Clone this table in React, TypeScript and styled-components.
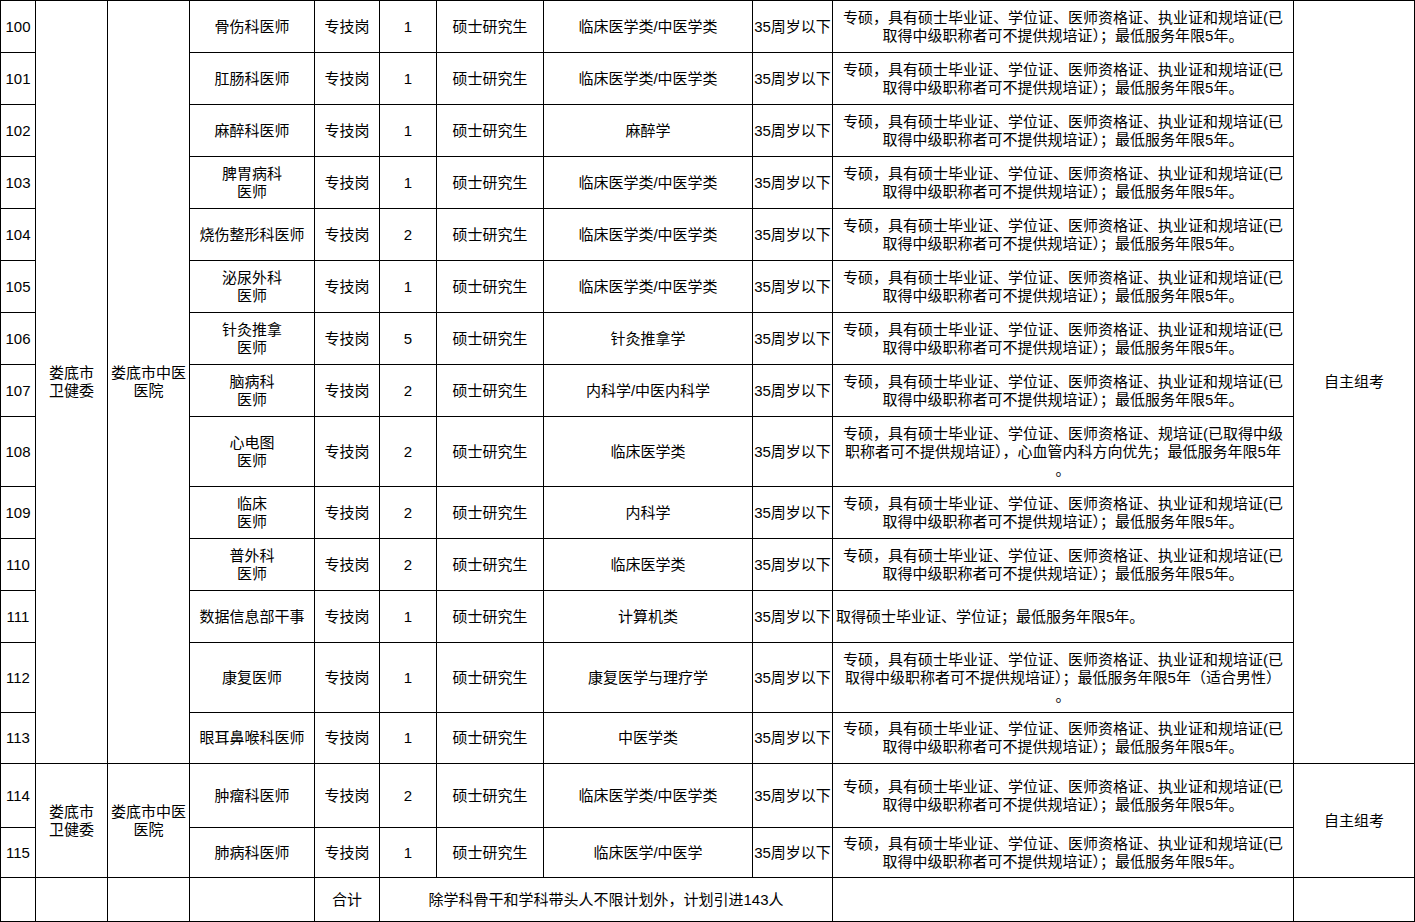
import React from 'react';
import styled, { createGlobalStyle } from 'styled-components';

const GlobalStyle = createGlobalStyle`
  html, body {
    margin: 0;
    padding: 0;
    background: #fff;
  }
  body {
    font-family: 'Liberation Sans', 'Noto Sans CJK SC', sans-serif;
    color: #000;
  }
`;

const Sheet = styled.table`
  border-collapse: collapse;
  table-layout: fixed;
  width: 1414px;
  font-size: 15px;
  line-height: 18px;
`;

const Row = styled.tr<{ $h: number }>`
  height: ${(p) => p.$h}px;
`;

const Cell = styled.td<{ $left?: boolean }>`
  border: 1px solid #000;
  padding: 0;
  text-align: ${(p) => (p.$left ? 'left' : 'center')};
  vertical-align: middle;
  white-space: nowrap;
  overflow: hidden;
  padding-left: ${(p) => (p.$left ? '3px' : '0')};
`;

const Line = styled.div`
  white-space: nowrap;
`;

const widths = [35, 72, 82, 125, 65, 57, 107, 209, 80, 461, 121];

const STD = [
  '专硕，具有硕士毕业证、学位证、医师资格证、执业证和规培证(已',
  '取得中级职称者可不提供规培证）；最低服务年限5年。',
];

type Job = {
  no: number;
  post: string[];
  count: number;
  major: string;
  cond?: string[];
  left?: boolean;
  h: number;
};

const jobs: Job[] = [
  { no: 100, post: ['骨伤科医师'], count: 1, major: '临床医学类/中医学类', h: 52 },
  { no: 101, post: ['肛肠科医师'], count: 1, major: '临床医学类/中医学类', h: 52 },
  { no: 102, post: ['麻醉科医师'], count: 1, major: '麻醉学', h: 52 },
  { no: 103, post: ['脾胃病科', '医师'], count: 1, major: '临床医学类/中医学类', h: 52 },
  { no: 104, post: ['烧伤整形科医师'], count: 2, major: '临床医学类/中医学类', h: 52 },
  { no: 105, post: ['泌尿外科', '医师'], count: 1, major: '临床医学类/中医学类', h: 52 },
  { no: 106, post: ['针灸推拿', '医师'], count: 5, major: '针灸推拿学', h: 52 },
  { no: 107, post: ['脑病科', '医师'], count: 2, major: '内科学/中医内科学', h: 52 },
  {
    no: 108,
    post: ['心电图', '医师'],
    count: 2,
    major: '临床医学类',
    cond: [
      '专硕，具有硕士毕业证、学位证、医师资格证、规培证(已取得中级',
      '职称者可不提供规培证），心血管内科方向优先；最低服务年限5年',
      '。',
    ],
    h: 70,
  },
  { no: 109, post: ['临床', '医师'], count: 2, major: '内科学', h: 52 },
  { no: 110, post: ['普外科', '医师'], count: 2, major: '临床医学类', h: 52 },
  {
    no: 111,
    post: ['数据信息部干事'],
    count: 1,
    major: '计算机类',
    cond: ['取得硕士毕业证、学位证；最低服务年限5年。'],
    left: true,
    h: 52,
  },
  {
    no: 112,
    post: ['康复医师'],
    count: 1,
    major: '康复医学与理疗学',
    cond: [
      '专硕，具有硕士毕业证、学位证、医师资格证、执业证和规培证(已',
      '取得中级职称者可不提供规培证）；最低服务年限5年（适合男性）',
      '。',
    ],
    h: 70,
  },
  { no: 113, post: ['眼耳鼻喉科医师'], count: 1, major: '中医学类', h: 51 },
  { no: 114, post: ['肿瘤科医师'], count: 2, major: '临床医学类/中医学类', h: 64 },
  { no: 115, post: ['肺病科医师'], count: 1, major: '临床医学/中医学', h: 50 },
];

// merged blocks: first row number -> how many rows the unit / hospital / exam cells span
const groups: Record<number, number> = { 100: 14, 114: 2 };

const Lines = ({ items }: { items: string[] }) => (
  <>
    {items.map((t, i) => (
      <Line key={i}>{t}</Line>
    ))}
  </>
);

export default function App() {
  return (
    <>
      <GlobalStyle />
      <Sheet>
        <colgroup>
          {widths.map((w, i) => (
            <col key={i} style={{ width: w }} />
          ))}
        </colgroup>
        <tbody>
          {jobs.map((j) => {
            const span = groups[j.no];
            return (
              <Row key={j.no} $h={j.h}>
                <Cell>{j.no}</Cell>
                {span && (
                  <>
                    <Cell rowSpan={span}>
                      <Lines items={['娄底市', '卫健委']} />
                    </Cell>
                    <Cell rowSpan={span}>
                      <Lines items={['娄底市中医', '医院']} />
                    </Cell>
                  </>
                )}
                <Cell>
                  <Lines items={j.post} />
                </Cell>
                <Cell>专技岗</Cell>
                <Cell>{j.count}</Cell>
                <Cell>硕士研究生</Cell>
                <Cell>{j.major}</Cell>
                <Cell>35周岁以下</Cell>
                <Cell $left={j.left}>
                  <Lines items={j.cond ?? STD} />
                </Cell>
                {span && <Cell rowSpan={span}>自主组考</Cell>}
              </Row>
            );
          })}
          <Row $h={44}>
            <Cell />
            <Cell />
            <Cell />
            <Cell />
            <Cell>合计</Cell>
            <Cell colSpan={4}>除学科骨干和学科带头人不限计划外，计划引进143人</Cell>
            <Cell />
            <Cell />
          </Row>
          <Row $h={24}>
            <Cell />
            <Cell />
            <Cell />
            <Cell />
            <Cell />
            <Cell colSpan={4} />
            <Cell />
            <Cell />
          </Row>
        </tbody>
      </Sheet>
    </>
  );
}
